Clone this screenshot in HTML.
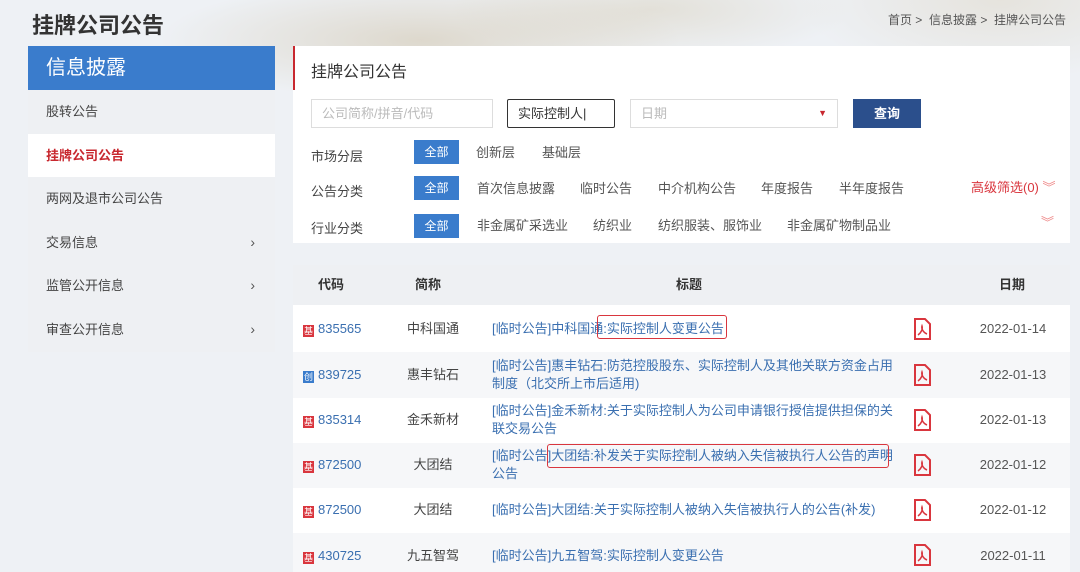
<!DOCTYPE html>
<html><head><meta charset="utf-8"><style>
*{margin:0;padding:0;box-sizing:border-box}
body{width:1080px;height:572px;overflow:hidden;background:#eef1f5;font-family:"Liberation Sans","Noto Sans CJK SC",sans-serif;position:relative;color:#333}
.abs{position:absolute}
.deco{left:0;top:0;width:1080px;height:110px;background:radial-gradient(ellipse 260px 60px at 420px 40px,rgba(190,170,130,.35),transparent),radial-gradient(ellipse 200px 50px at 650px 10px,rgba(200,185,150,.3),transparent),radial-gradient(ellipse 200px 80px at 1000px 0px,rgba(210,195,165,.3),transparent)}
.side{left:28px;top:46px;width:247px}
.side .hd{height:44px;background:#3a7ccc;color:#fff;font-size:20px;line-height:44px;padding-left:18px}
.side .it{height:43.6px;line-height:43.6px;padding-left:18px;font-size:13px;color:#444;background:#eef0f3;position:relative}
.side .it.on{background:#fff;color:#c8282f;font-weight:bold}
.side .it span{position:absolute;right:20px;top:0;font-size:14px;color:#555}
.panel{left:293px;top:46px;width:777px;height:197px;background:#fff}
.panel .bar{left:0;top:0;width:2px;height:44px;background:#c8282f}
.inp{height:29px;border:1px solid #ddd;font-size:13px;color:#bbb;line-height:27px;padding-left:10px}
.lbl{font-size:13px;color:#444;line-height:18px}
.all{background:#3a7ccc;color:#fff;font-size:12px;width:45px;height:24px;line-height:24px;text-align:center}
.opt{font-size:13px;color:#555;line-height:18px}
.thd{left:293px;top:265px;width:777px;height:40px;background:#eef0f3;font-size:13px;font-weight:bold;color:#333;line-height:18px}
.row{left:293px;width:777px;font-size:13px;line-height:18px}
.c1{position:absolute;left:10px;color:#3a6fb0}
.c1 i{display:inline-block;width:11px;height:12px;background:#d9363e;color:#fff;font-style:normal;font-size:9px;line-height:12px;text-align:center;margin-right:4px;vertical-align:-1px}
.c2{position:absolute;left:95px;width:90px;text-align:center;color:#444}
.c3{position:absolute;left:199px;width:406px;color:#3a6fb0}
.c5{position:absolute;left:680px;width:80px;text-align:center;color:#555}
.pdf{position:absolute;left:620px}
.box{position:absolute;border:1.5px solid #d9363e;border-radius:3px}
</style></head><body>
<div class="abs deco"></div>
<div class="abs" style="left:32px;top:8px;font-size:22px;font-weight:bold;color:#333">挂牌公司公告</div>
<div class="abs" style="right:14px;top:11px;font-size:12px;color:#555">首页 &gt;&nbsp; 信息披露 &gt;&nbsp; 挂牌公司公告</div>
<div class="abs side">
<div class="hd">信息披露</div>
<div class="it">股转公告</div>
<div class="it on">挂牌公司公告</div>
<div class="it">两网及退市公司公告</div>
<div class="it">交易信息<span>›</span></div>
<div class="it">监管公开信息<span>›</span></div>
<div class="it">审查公开信息<span>›</span></div>
</div>
<div class="abs panel">
<div class="abs bar"></div>
<div class="abs" style="left:18px;top:12px;font-size:16px;color:#333">挂牌公司公告</div>
<div class="abs inp" style="left:18px;top:53px;width:182px">公司简称/拼音/代码</div>
<div class="abs inp" style="left:214px;top:53px;width:108px;border:1.5px solid #333;color:#333;border-radius:2px">实际控制人|</div>
<div class="abs inp" style="left:337px;top:53px;width:208px">日期<span style="position:absolute;right:10px;top:0;color:#c8282f;font-size:9px">▼</span></div>
<div class="abs" style="left:560px;top:53px;width:68px;height:29px;background:#2b4f8c;color:#fff;font-size:13px;font-weight:bold;text-align:center;line-height:29px">查询</div>
<div class="abs lbl" style="left:18px;top:102px">市场分层</div>
<div class="abs all" style="left:121px;top:94px">全部</div>
<div class="abs opt" style="left:183px;top:98px">创新层</div>
<div class="abs opt" style="left:249px;top:98px">基础层</div>
<div class="abs lbl" style="left:18px;top:137px">公告分类</div>
<div class="abs all" style="left:121px;top:130px">全部</div>
<div class="abs opt" style="left:184px;top:134px">首次信息披露</div>
<div class="abs opt" style="left:287px;top:134px">临时公告</div>
<div class="abs opt" style="left:365px;top:134px">中介机构公告</div>
<div class="abs opt" style="left:468px;top:134px">年度报告</div>
<div class="abs opt" style="left:546px;top:134px">半年度报告</div>
<div class="abs" style="left:678px;top:133px;font-size:13px;color:#d9363e;line-height:18px">高级筛选(0) <span style="color:#e88">︾</span></div>
<div class="abs lbl" style="left:18px;top:174px">行业分类</div>
<div class="abs all" style="left:121px;top:168px">全部</div>
<div class="abs opt" style="left:184px;top:171px">非金属矿采选业</div>
<div class="abs opt" style="left:300px;top:171px">纺织业</div>
<div class="abs opt" style="left:365px;top:171px">纺织服装、服饰业</div>
<div class="abs opt" style="left:494px;top:171px">非金属矿物制品业</div>
<div class="abs" style="left:748px;top:166px;font-size:13px;color:#e88">︾</div>
</div>
<div class="abs thd">
<span class="abs" style="left:25px;top:11px">代码</span>
<span class="abs" style="left:122px;top:11px">简称</span>
<span class="abs" style="left:383px;top:11px">标题</span>
<span class="abs" style="left:706px;top:11px">日期</span>
</div>
<div class="abs row" style="top:305px;height:47px;background:#fff">
<span class="c1" style="top:15px"><i>基</i>835565</span><span class="c2" style="top:15px">中科国通</span>
<span class="c3" style="top:15px">[临时公告]中科国通:实际控制人变更公告</span>
<span class="box" style="left:304px;top:10px;width:130px;height:24px"></span>
<svg class="pdf" style="top:13px" width="18" height="22" viewBox="0 0 18 22"><path d="M2 1h10l5 5v15H2z" fill="none" stroke="#d9363e" stroke-width="2"/><path d="M5 17c3-2 5-6 4-9-1 3 2 7 5 8" fill="none" stroke="#d9363e" stroke-width="1.5"/></svg>
<span class="c5" style="top:15px">2022-01-14</span></div>
<div class="abs row" style="top:352px;height:46px;background:#f6f7f9">
<span class="c1" style="top:14px"><i style="background:#3a7ccc">创</i>839725</span><span class="c2" style="top:14px">惠丰钻石</span>
<span class="c3" style="top:5px">[临时公告]惠丰钻石:防范控股股东、实际控制人及其他关联方资金占用制度（北交所上市后适用)</span>
<svg class="pdf" style="top:12px" width="18" height="22" viewBox="0 0 18 22"><path d="M2 1h10l5 5v15H2z" fill="none" stroke="#d9363e" stroke-width="2"/><path d="M5 17c3-2 5-6 4-9-1 3 2 7 5 8" fill="none" stroke="#d9363e" stroke-width="1.5"/></svg>
<span class="c5" style="top:14px">2022-01-13</span></div>
<div class="abs row" style="top:398px;height:45px;background:#fff">
<span class="c1" style="top:13px"><i>基</i>835314</span><span class="c2" style="top:13px">金禾新材</span>
<span class="c3" style="top:4px">[临时公告]金禾新材:关于实际控制人为公司申请银行授信提供担保的关联交易公告</span>
<svg class="pdf" style="top:11px" width="18" height="22" viewBox="0 0 18 22"><path d="M2 1h10l5 5v15H2z" fill="none" stroke="#d9363e" stroke-width="2"/><path d="M5 17c3-2 5-6 4-9-1 3 2 7 5 8" fill="none" stroke="#d9363e" stroke-width="1.5"/></svg>
<span class="c5" style="top:13px">2022-01-13</span></div>
<div class="abs row" style="top:443px;height:45px;background:#f6f7f9">
<span class="c1" style="top:13px"><i>基</i>872500</span><span class="c2" style="top:13px">大团结</span>
<span class="c3" style="top:4px">[临时公告]大团结:补发关于实际控制人被纳入失信被执行人公告的声明公告</span>
<span class="box" style="left:254px;top:1px;width:342px;height:24px"></span>
<svg class="pdf" style="top:11px" width="18" height="22" viewBox="0 0 18 22"><path d="M2 1h10l5 5v15H2z" fill="none" stroke="#d9363e" stroke-width="2"/><path d="M5 17c3-2 5-6 4-9-1 3 2 7 5 8" fill="none" stroke="#d9363e" stroke-width="1.5"/></svg>
<span class="c5" style="top:13px">2022-01-12</span></div>
<div class="abs row" style="top:488px;height:45px;background:#fff">
<span class="c1" style="top:13px"><i>基</i>872500</span><span class="c2" style="top:13px">大团结</span>
<span class="c3" style="top:13px">[临时公告]大团结:关于实际控制人被纳入失信被执行人的公告(补发)</span>
<svg class="pdf" style="top:11px" width="18" height="22" viewBox="0 0 18 22"><path d="M2 1h10l5 5v15H2z" fill="none" stroke="#d9363e" stroke-width="2"/><path d="M5 17c3-2 5-6 4-9-1 3 2 7 5 8" fill="none" stroke="#d9363e" stroke-width="1.5"/></svg>
<span class="c5" style="top:13px">2022-01-12</span></div>
<div class="abs row" style="top:533px;height:39px;background:#f6f7f9">
<span class="c1" style="top:14px"><i>基</i>430725</span><span class="c2" style="top:14px">九五智驾</span>
<span class="c3" style="top:14px">[临时公告]九五智驾:实际控制人变更公告</span>
<svg class="pdf" style="top:11px" width="18" height="22" viewBox="0 0 18 22"><path d="M2 1h10l5 5v15H2z" fill="none" stroke="#d9363e" stroke-width="2"/><path d="M5 17c3-2 5-6 4-9-1 3 2 7 5 8" fill="none" stroke="#d9363e" stroke-width="1.5"/></svg>
<span class="c5" style="top:14px">2022-01-11</span></div>
</body></html>
